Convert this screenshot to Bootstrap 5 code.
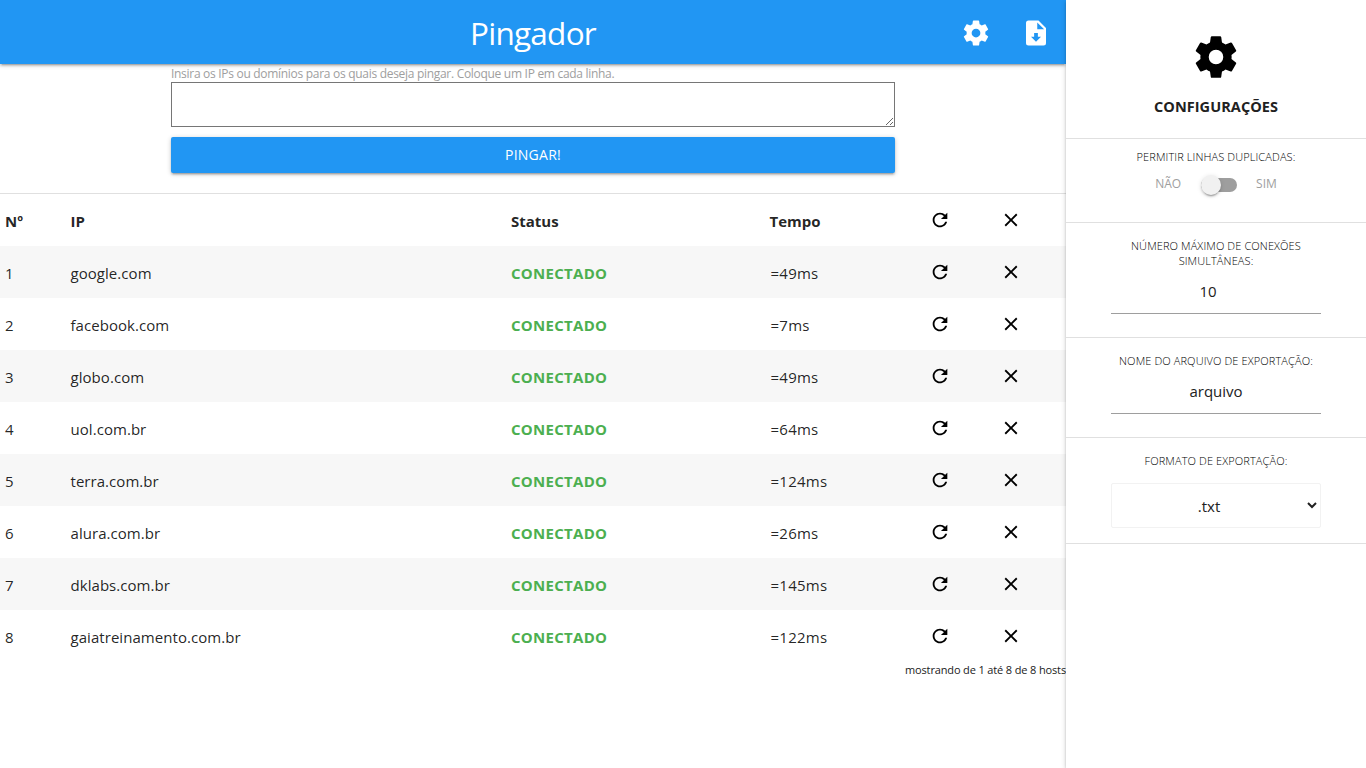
<!DOCTYPE html>
<html lang="pt-br">
<head>
<meta charset="utf-8">
<meta name="viewport" content="width=device-width, initial-scale=1">
<title>Pingador</title>
<link href="https://cdn.jsdelivr.net/npm/bootstrap@5.3.0/dist/css/bootstrap.min.css" rel="stylesheet">
<style>
body{font-family:"Open Sans","Noto Sans",sans-serif;font-size:15px;line-height:1.5;color:rgba(0,0,0,.87);background:#fff}
svg{display:block;fill:currentColor}
.app{height:768px;overflow:hidden}
.topbar{height:64px;background:#2196f3;color:#fff;box-shadow:0 2px 2px 0 rgba(0,0,0,.14),0 3px 1px -2px rgba(0,0,0,.12),0 1px 5px 0 rgba(0,0,0,.2)}
.topbar h1{font-size:31.5px;font-weight:400;line-height:64px;padding-top:1px;letter-spacing:-.75px}
.tools{gap:30px;padding:1px 15px 0 0}
.form-area{width:724px;height:129px}
.hint{font-size:12px;line-height:16px;padding-top:2px;letter-spacing:-.295px;color:#9e9e9e}
.hosts-input{height:45px;border:1px solid #767676;border-radius:0;padding:2px;resize:both;background:#fff}
.ping-btn{height:36px;margin-top:10px;padding:0;line-height:36px;font-size:14px;letter-spacing:.25px;border:0;border-radius:2px;background:#2196f3;color:#fff;box-shadow:0 2px 2px 0 rgba(0,0,0,.14),0 3px 1px -2px rgba(0,0,0,.12),0 1px 5px 0 rgba(0,0,0,.2)}
.host-list{table-layout:fixed;border-top:1px solid #e0e0e0;border-collapse:separate;border-spacing:0}
.host-list td,.host-list th{height:52px;padding:3px 5px 0;border:0;vertical-align:middle;white-space:nowrap}
.host-list td svg,.host-list th svg{margin-top:-4px;color:#000}
.host-list tbody tr:nth-child(odd){background:#f7f7f7}
.host-name{letter-spacing:.05px}
.host-list .online{color:#4caf50;font-weight:700;letter-spacing:.28px}
.host-list .ping-time{letter-spacing:.25px;padding-left:6px}
.total{font-size:11px;line-height:16px;letter-spacing:-.14px;color:#212121}
.sidebar{width:300px;background:#fff;z-index:2;box-shadow:0 2px 2px 0 rgba(0,0,0,.14),0 3px 1px -2px rgba(0,0,0,.12),0 1px 5px 0 rgba(0,0,0,.2)}
.pane{border-bottom:1px solid #e0e0e0;padding-top:15px}
.pane-title{height:139px;padding-top:32px;color:#000}
.pane-title h2{font-size:14.5px;font-weight:700;line-height:22px;margin:14px 0 0;letter-spacing:.06px;color:#212121}
.pane-switch{height:84px;padding-top:10px}
.pane-connections{height:115px}
.pane-file{height:100px}
.pane-format{height:106px}
.pane-label{font-size:11px;line-height:15px;font-weight:300;letter-spacing:.11px;color:#000;width:210px}
.choice{font-size:12px;line-height:18px;margin-top:11px;color:#9e9e9e}
.toggle{width:36px;height:14px;border-radius:15px;background:#9e9e9e;margin:2px 19px 0 20px}
.toggle span{width:20px;height:20px;border-radius:50%;background:#f1f1f1;box-shadow:0 3px 1px -2px rgba(0,0,0,.2),0 2px 2px 0 rgba(0,0,0,.14),0 1px 5px 0 rgba(0,0,0,.12);margin-top:-3px}
.line-input{width:210px;height:45px;margin-top:1px;border:0;border-bottom:1px solid #9e9e9e;text-align:center;background:transparent;padding:0;color:#212121}
.format{width:210px;height:45px;margin-top:15px;border:1px solid #f2f2f2;border-radius:2px;background:#fff;padding:5px 6px 5px 4px;text-align:center;text-align-last:center;color:#212121}
</style>
</head>
<body>
<svg class="d-none">
<symbol id="gear" viewBox="0 0 24 24"><path d="M12 15.5A3.5 3.5 0 0 1 8.5 12 3.5 3.5 0 0 1 12 8.5a3.5 3.5 0 0 1 3.5 3.5A3.5 3.5 0 0 1 12 15.5M19.43 12.97C19.47 12.65 19.5 12.33 19.5 12S19.47 11.34 19.43 11L21.54 9.37C21.73 9.22 21.78 8.95 21.66 8.73L19.66 5.27C19.54 5.05 19.27 4.96 19.05 5.05L16.56 6.05C16.04 5.66 15.5 5.32 14.87 5.07L14.5 2.42C14.46 2.18 14.25 2 14 2H10C9.75 2 9.54 2.18 9.5 2.42L9.13 5.07C8.5 5.32 7.96 5.66 7.44 6.05L4.95 5.05C4.73 4.96 4.46 5.05 4.34 5.27L2.34 8.73C2.21 8.95 2.27 9.22 2.46 9.37L4.57 11C4.53 11.34 4.5 11.67 4.5 12S4.53 12.65 4.57 12.97L2.46 14.63C2.27 14.78 2.21 15.05 2.34 15.27L4.34 18.73C4.46 18.95 4.73 19.03 4.95 18.95L7.44 17.94C7.96 18.34 8.5 18.68 9.13 18.93L9.5 21.58C9.54 21.82 9.75 22 10 22H14C14.25 22 14.46 21.82 14.5 21.58L14.87 18.93C15.5 18.67 16.04 18.34 16.56 17.94L19.05 18.95C19.27 19.03 19.54 18.95 19.66 18.73L21.66 15.27C21.78 15.05 21.73 14.78 21.54 14.63Z"/></symbol>
<symbol id="export" viewBox="0 0 24 24"><path fill-rule="evenodd" d="M14 2H6A2 2 0 0 0 4 4V20A2 2 0 0 0 6 22H18A2 2 0 0 0 20 20V8ZM12 19L8 15H10.5V12H13.5V15H16ZM13 9V3.5L18.5 9Z"/></symbol>
<symbol id="refresh" viewBox="0 0 24 24"><path d="M17.65 6.35C16.2 4.9 14.21 4 12 4c-4.42 0-7.99 3.58-7.99 8s3.57 8 7.99 8c3.73 0 6.84-2.55 7.73-6h-2.08c-.82 2.33-3.04 4-5.65 4-3.31 0-6-2.69-6-6s2.69-6 6-6c1.66 0 3.14.69 4.22 1.78L13 11h7V4z"/></symbol>
<symbol id="close" viewBox="0 0 24 24"><path d="M19 6.41L17.59 5 12 10.59 6.41 5 5 6.41 10.59 12 5 17.59 6.41 19 12 13.41 17.59 19 19 17.59 13.41 12z"/></symbol>
</svg>
<div class="app d-flex">
  <main class="flex-grow-1">
    <header class="topbar position-relative">
      <h1 class="text-center m-0">Pingador</h1>
      <div class="tools position-absolute top-0 end-0 h-100 d-flex align-items-center">
        <svg width="30" height="30"><use href="#gear"/></svg>
        <svg width="30" height="30"><use href="#export"/></svg>
      </div>
    </header>
    <section class="form-area mx-auto d-flex flex-column">
      <label class="hint" for="hosts">Insira os IPs ou domínios para os quais deseja pingar. Coloque um IP em cada linha.</label>
      <textarea id="hosts" class="hosts-input w-100"></textarea>
      <button class="ping-btn w-100">PINGAR!</button>
    </section>
    <table class="host-list w-100">
      <colgroup><col style="width:65.5px"><col style="width:440.5px"><col style="width:258.5px"><col style="width:159.5px"><col style="width:71px"><col></colgroup>
      <thead><tr><th>Nº</th><th>IP</th><th>Status</th><th>Tempo</th><th><svg width="22" height="22"><use href="#refresh"/></svg></th><th><svg width="22" height="22"><use href="#close"/></svg></th></tr></thead>
      <tbody id="rows"></tbody>
    </table>
    <div class="total text-end">mostrando de 1 até 8 de 8 hosts</div>
  </main>
  <aside class="sidebar flex-shrink-0 position-relative">
    <div class="pane pane-title d-flex flex-column align-items-center">
      <svg width="50" height="50"><use href="#gear"/></svg>
      <h2>CONFIGURAÇÕES</h2>
    </div>
    <div class="pane pane-switch d-flex flex-column align-items-center">
      <div class="pane-label text-center">PERMITIR LINHAS DUPLICADAS:</div>
      <div class="choice d-flex align-items-center"><span>NÃO</span><span class="toggle d-flex"><span></span></span><span>SIM</span></div>
    </div>
    <div class="pane pane-connections d-flex flex-column align-items-center">
      <div class="pane-label text-center">NÚMERO MÁXIMO DE CONEXÕES SIMULTÂNEAS:</div>
      <input class="line-input pe-3" value="10">
    </div>
    <div class="pane pane-file d-flex flex-column align-items-center">
      <div class="pane-label text-center">NOME DO ARQUIVO DE EXPORTAÇÃO:</div>
      <input class="line-input" value="arquivo">
    </div>
    <div class="pane pane-format d-flex flex-column align-items-center">
      <div class="pane-label text-center">FORMATO DE EXPORTAÇÃO:</div>
      <select class="format"><option>.txt</option></select>
    </div>
  </aside>
</div>
<script>
const hosts=[["google.com",49],["facebook.com",7],["globo.com",49],["uol.com.br",64],["terra.com.br",124],["alura.com.br",26],["dklabs.com.br",145],["gaiatreinamento.com.br",122]];
document.getElementById("rows").innerHTML=hosts.map(([h,t],i)=>`<tr><td>${i+1}</td><td class="host-name">${h}</td><td class="online">CONECTADO</td><td class="ping-time">=${t}ms</td><td><svg width="22" height="22"><use href="#refresh"/></svg></td><td><svg width="22" height="22"><use href="#close"/></svg></td></tr>`).join("");
</script>
<script src="https://cdn.jsdelivr.net/npm/bootstrap@5.3.0/dist/js/bootstrap.bundle.min.js"></script>
</body>
</html>
